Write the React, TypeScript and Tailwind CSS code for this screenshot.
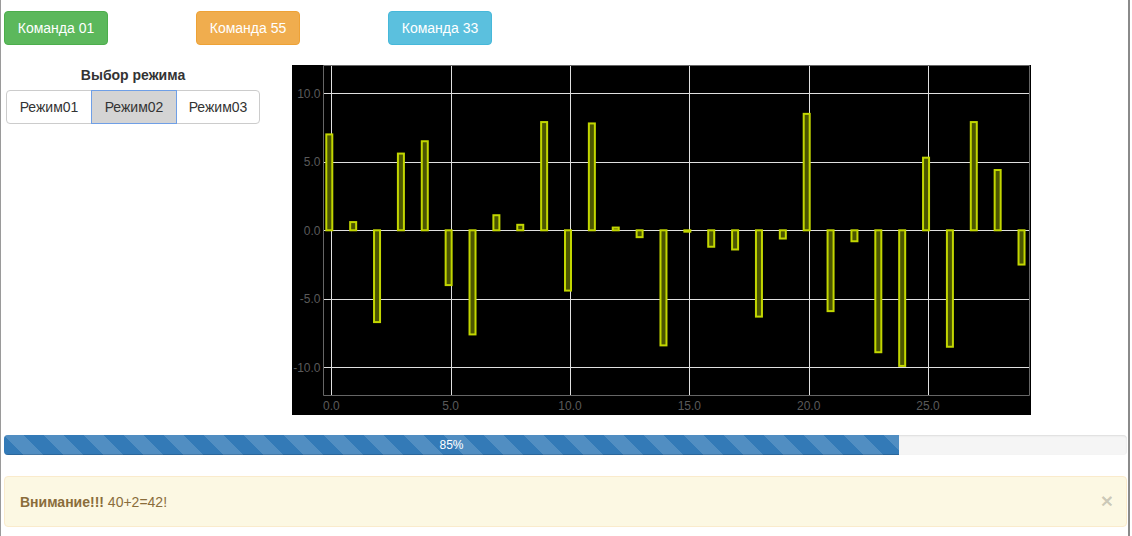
const VALUES = [
  7.0, 0.6, -6.7, 5.6, 6.5, -4.0, -7.6, 1.1, 0.4, 7.9,
  -4.4, 7.8, 0.2, -0.5, -8.4, -0.1, -1.2, -1.4, -6.3, -0.6,
  8.5, -5.9, -0.8, -8.9, -9.9, 5.3, -8.5, 7.9, 4.4, -2.5,
];

// plot geometry (svg coords)
const PL = 31;
const PR = 737;
const PT = 0.5;
const PB = 330;
const sx = (v: number) => 39.3 + v * 23.87;
const sy = (v: number) => 165.3 - v * 13.7;

function BarChart() {
  const xt = [0, 5, 10, 15, 20, 25];
  const yt = [10, 5, 0, -5, -10];
  return (
    <svg width="739" height="350" className="block shrink-0 bg-black">
      {/* grid */}
      {xt.map((t) => (
        <line key={'gx' + t} x1={Math.round(sx(t)) + 0.5} x2={Math.round(sx(t)) + 0.5} y1={PT} y2={PB} stroke="#e0e0e0" strokeWidth="1" />
      ))}
      {yt.map((t) => (
        <line key={'gy' + t} x1={PL} x2={PR} y1={Math.round(sy(t)) + 0.5} y2={Math.round(sy(t)) + 0.5} stroke="#e0e0e0" strokeWidth="1" />
      ))}
      {/* frame */}
      <path d={`M${PL + 0.5} ${PT} H${PR + 0.5} V${PB + 0.5} H${PL + 0.5} Z`} fill="none" stroke="#666" strokeWidth="1" />

      {/* bars */}
      {VALUES.map((v, i) => {
        const y0 = sy(0);
        const y1 = sy(v);
        const top = Math.min(y0, y1);
        const h = Math.max(Math.abs(y1 - y0), 1);
        return (
          <rect key={i} x={sx(i) - 5} y={top} width="6" height={h} fill="#4b5500" stroke="#c2d600" strokeWidth="2" />
        );
      })}

      {/* labels */}
      {yt.map((t) => (
        <text key={'ly' + t} x="28.5" y={sy(t) + 4.5} textAnchor="end" fontSize="12" fill="#5a5a5a" fontFamily="'Liberation Sans', Arial, sans-serif">
          {t.toFixed(1)}
        </text>
      ))}
      {xt.map((t) => (
        <text key={'lx' + t} x={sx(t)} y="345" textAnchor="middle" fontSize="12" fill="#5a5a5a" fontFamily="'Liberation Sans', Arial, sans-serif">
          {t.toFixed(1)}
        </text>
      ))}
    </svg>
  );
}

export default function App() {
  return (
    <div className="w-[1132px] h-[536px] overflow-hidden bg-white font-['Liberation_Sans',Arial,sans-serif] text-[14px] text-[#333]">
      <div className="w-[1130px] h-full border-l border-l-[#9a9a9a] border-r-2 border-r-[#8a8a8a] pl-[3px] pr-px flex flex-col">
        {/* command buttons */}
        <div className="flex gap-[88px] mt-[11px]">
          <button className="w-[104px] h-[34px] rounded-[4px] border border-[#4cae4c] bg-[#5cb85c] text-white leading-[20px]">Команда 01</button>
          <button className="w-[104px] h-[34px] rounded-[4px] border border-[#eea236] bg-[#f0ad4e] text-white leading-[20px]">Команда 55</button>
          <button className="w-[104px] h-[34px] rounded-[4px] border border-[#46b8da] bg-[#5bc0de] text-white leading-[20px]">Команда 33</button>
        </div>

        {/* mode + chart */}
        <div className="flex mt-[20px] h-[350px]">
          <div className="w-[288px] shrink-0 pl-[2px]">
            <div className="w-[254px] flex flex-col items-center">
              <div className="h-[20px] leading-[20px] font-bold text-[14px]">Выбор режима</div>
              <div className="mt-[5px] flex w-[254px] h-[34px]">
                <button className="w-[86px] h-[34px] border border-[#ccc] rounded-l-[4px] bg-white leading-[20px]">Режим01</button>
                <button className="w-[86px] h-[34px] -ml-px border border-[#6f9fe6] bg-[#d4d4d4] leading-[20px] relative">Режим02</button>
                <button className="w-[84px] h-[34px] -ml-px border border-[#ccc] rounded-r-[4px] bg-white leading-[20px]">Режим03</button>
              </div>
            </div>
          </div>
          <BarChart />
        </div>

        {/* progress */}
        <div className="mt-[20px] h-[20px] w-[1123px] rounded-[4px] bg-[#f5f5f5] shadow-[inset_0_1px_2px_rgba(0,0,0,0.1)] overflow-hidden flex">
          <div className="w-[895px] h-full bg-[#337ab7] bg-[linear-gradient(45deg,rgba(255,255,255,.15)_25%,transparent_25%,transparent_50%,rgba(255,255,255,.15)_50%,rgba(255,255,255,.15)_75%,transparent_75%,transparent)] bg-size-[40px_40px] text-white text-[12px] leading-[20px] text-center shadow-[inset_0_-1px_0_rgba(0,0,0,0.15)]">
            85%
          </div>
        </div>

        {/* alert */}
        <div className="mt-[21px] h-[51px] w-[1123px] rounded-[4px] border border-[#faebcc] bg-[#fcf8e3] text-[#8a6d3b] px-[15px] flex items-center justify-between">
          <div className="leading-[20px]">
            <span className="font-bold">Внимание!!!</span> 40+2=42!
          </div>
          <span className="text-[21px] font-bold leading-none text-black/20 mr-[-2px] mb-[2px]">×</span>
        </div>
      </div>
    </div>
  );
}
